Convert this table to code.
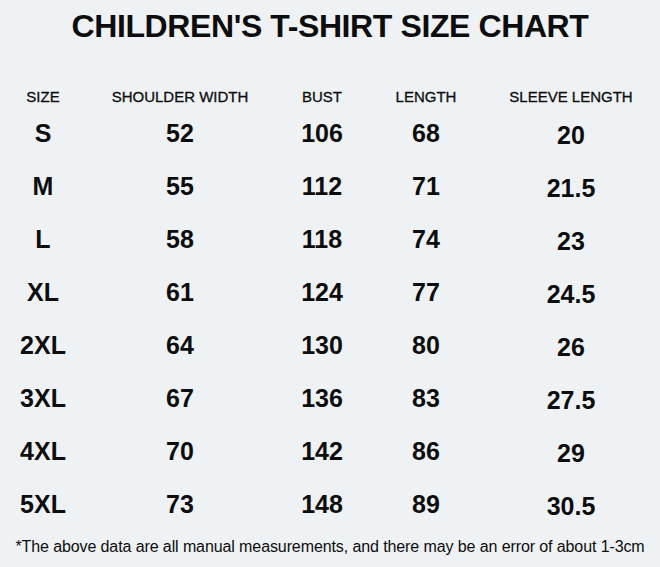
const header = ["SIZE", "SHOULDER WIDTH", "BUST", "LENGTH", "SLEEVE LENGTH"];

const rows: [string, number, number, number, string][] = [
  ["S", 52, 106, 68, "20"],
  ["M", 55, 112, 71, "21.5"],
  ["L", 58, 118, 74, "23"],
  ["XL", 61, 124, 77, "24.5"],
  ["2XL", 64, 130, 80, "26"],
  ["3XL", 67, 136, 83, "27.5"],
  ["4XL", 70, 142, 86, "29"],
  ["5XL", 73, 148, 89, "30.5"],
];

const cols = "grid grid-cols-[86px_188px_96px_112px_178px]";

export default function App() {
  return (
    <div
      className="w-[660px] h-[567px] overflow-hidden bg-[#eff2f4] text-[#0d0d0d]"
      style={{ fontFamily: '"Liberation Sans", Arial, sans-serif' }}
    >
      <h1 className="pt-[9px] text-center text-[32px] leading-[34px] font-bold tracking-[-0.4px]">
        CHILDREN'S T-SHIRT SIZE CHART
      </h1>

      <div className={`${cols} mt-[45px] h-[18px] items-center text-[15px] leading-[18px] [-webkit-text-stroke:0.3px_#0d0d0d]`}>
        {header.map((h) => (
          <div key={h} className="text-center">
            {h}
          </div>
        ))}
      </div>

      {rows.map(([size, shoulder, bust, length, sleeve]) => (
        <div key={size} className={`${cols} h-[53px] items-center text-[25px] leading-[30px] font-bold`}>
          <div className="text-center">{size}</div>
          <div className="text-center">{shoulder}</div>
          <div className="text-center">{bust}</div>
          <div className="text-center">{length}</div>
          <div className="text-center pt-[4px]">{sleeve}</div>
        </div>
      ))}

      <p className="mt-[7px] text-center text-[16px] leading-[20px] tracking-[-0.1px]">
        *The above data are all manual measurements, and there may be an error of about 1-3cm
      </p>
    </div>
  );
}
